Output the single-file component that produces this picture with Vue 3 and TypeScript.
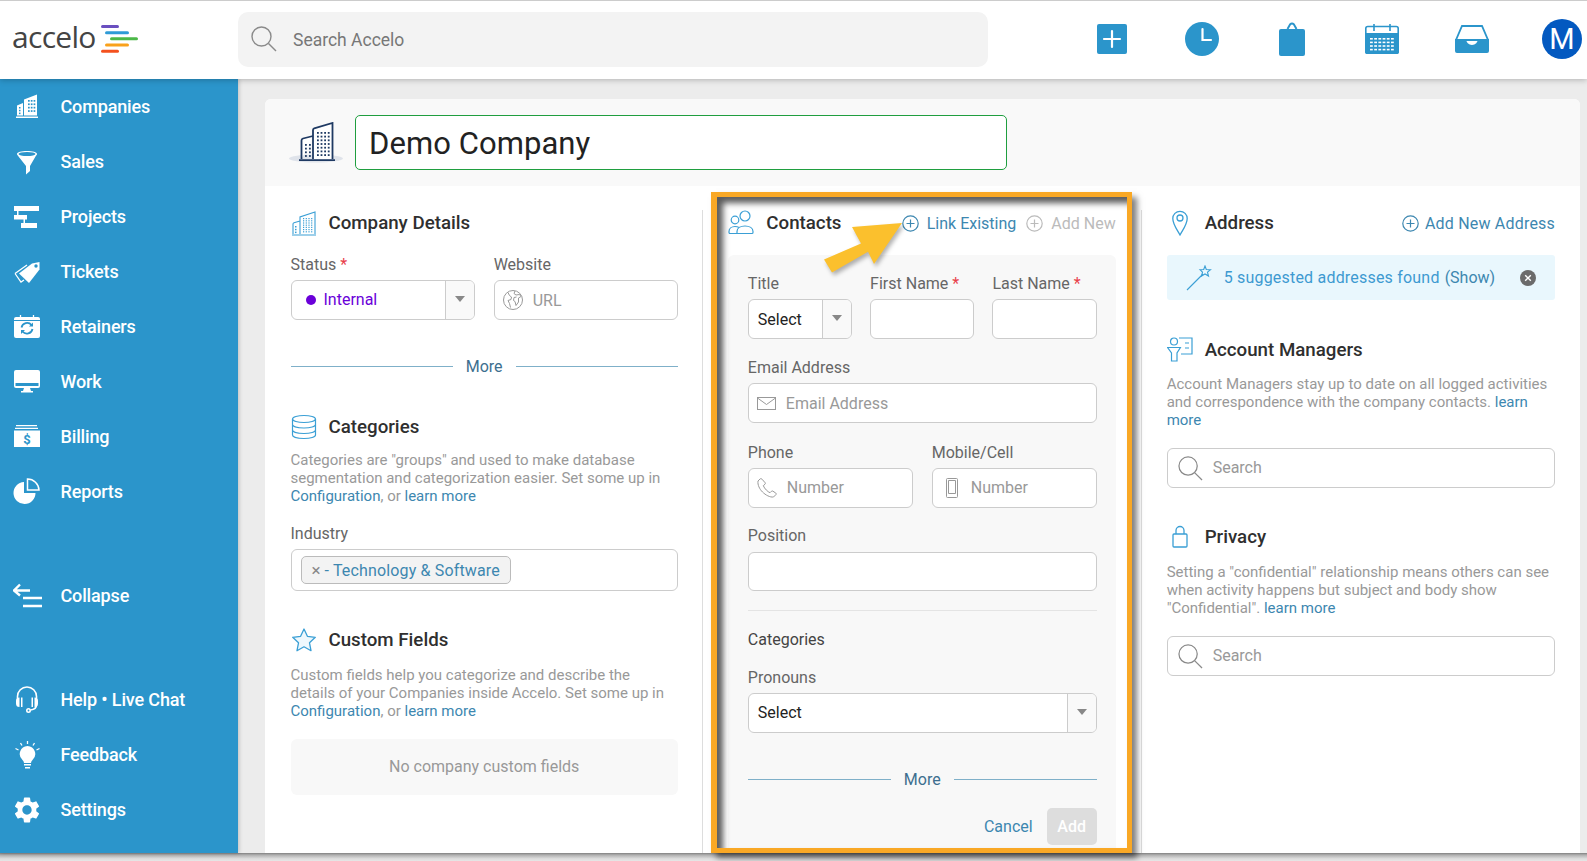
<template>
  <div class="page">
    <header class="topbar">
      <div class="logo">
        <span class="logo-word">accelo</span>
        <svg class="logo-bars" width="40" height="30" viewBox="0 0 40 30">
          <rect x="1" y="0" width="18" height="3" rx="1.5" fill="#6a4fc0" />
          <rect x="5" y="6.2" width="24" height="3" rx="1.5" fill="#2f9bd6" />
          <rect x="10" y="12.2" width="28" height="3" rx="1.5" fill="#4cb848" />
          <rect x="5" y="18.5" width="24" height="3" rx="1.5" fill="#f9a11b" />
          <rect x="1" y="24.7" width="18" height="3" rx="1.5" fill="#f4511e" />
        </svg>
      </div>
      <div class="global-search">
        <svg width="26" height="26" viewBox="0 0 26 26" fill="none" stroke="#8a8a8a" stroke-width="1.4">
          <circle cx="10.5" cy="10.5" r="9.5" />
          <path d="M17.5 17.5l7.5 7.5" />
        </svg>
        <span>Search Accelo</span>
      </div>
      <div class="quick">
        <svg class="q1" width="30" height="30" viewBox="0 0 30 30">
          <rect width="30" height="30" rx="2" fill="#2b95cb" />
          <path d="M15 7v16M7 15h16" stroke="#fff" stroke-width="2.2" stroke-linecap="round" />
        </svg>
        <svg class="q2" width="34" height="34" viewBox="0 0 34 34">
          <circle cx="17" cy="17" r="17" fill="#2b95cb" />
          <path d="M17.5 7v11h8.5" fill="none" stroke="#fff" stroke-width="2.2" stroke-linecap="round" />
        </svg>
        <svg class="q3" width="26" height="34" viewBox="0 0 26 34">
          <path d="M8.5 7l2.5-4.5q2-2 4 0L17.500 7" fill="none" stroke="#2b95cb" stroke-width="2" />
          <rect y="7" width="26" height="27" rx="2" fill="#2b95cb" />
        </svg>
        <svg class="q4" width="34" height="30" viewBox="0 0 34 30">
          <rect x=".8" y="2.500" width="32.400" height="26.700" rx="2" fill="#fff" stroke="#2b95cb" stroke-width="1.600" />
          <path d="M9 0v7M25 0v7" stroke="#2b95cb" stroke-width="1.600" />
          <path d="M0 9h34v19a2 2 0 0 1-2 2H2a2 2 0 0 1-2-2z" fill="#2b95cb" />
          <g fill="#fff" v-html="calDots"></g>
        </svg>
        <svg class="q5" width="34" height="28" viewBox="0 0 34 28">
          <path d="M7 1h20l6 14H1z" fill="none" stroke="#2b95cb" stroke-width="1.800" />
          <path d="M0 14h11a6 6 0 0 0 12 0h11v12a2 2 0 0 1-2 2H2a2 2 0 0 1-2-2z" fill="#2b95cb" />
        </svg>
        <div class="avatar">M</div>
      </div>
    </header>

    <div class="main">
      <nav class="sidebar">
        <a v-for="item in nav" :key="item.label" class="nav-item" :class="{ spaced: item.spaced }">
          <svg width="30" height="30" viewBox="0 0 30 30" v-html="item.icon"></svg>
          <span>{{ item.label }}</span>
        </a>
      </nav>

      <div class="content">
        <section class="card">
          <div class="card-head">
            <svg width="54" height="42" viewBox="0 0 54 42">
              <ellipse cx="27" cy="36.500" rx="27" ry="4" fill="#dfe3ea" />
              <path d="M12.500 37V18.500q0-1.500 1.500-2l10-2.500" fill="#fff" stroke="#1f3a63" stroke-width="1.800" />
              <path d="M24 37V8q0-1.200 1.200-1.600L43.500 1V37" fill="#fff" stroke="#1f3a63" stroke-width="1.800" />
              <path d="M10 38.200h36" stroke="#1f3a63" stroke-width="1.800" />
              <g fill="#1f3a63" v-html="bigWindows"></g>
            </svg>
            <div class="name-input">Demo Company</div>
          </div>

          <div class="columns">
            <div class="col first">
              <div class="sec-head">
                <svg width="26" height="26" viewBox="0 0 26 26" v-html="icons.building"></svg>
                <h3>Company Details</h3>
              </div>
              <div class="pair status-row">
                <div>
                  <label>Status <em>*</em></label>
                  <div class="field select">
                    <span class="dot"></span><span class="internal">Internal</span>
                    <span class="caret"></span>
                  </div>
                </div>
                <div>
                  <label>Website</label>
                  <div class="field url">
                    <svg width="20" height="20" viewBox="0 0 20 20" fill="none" stroke="#999" stroke-width="1">
                      <circle cx="10" cy="10" r="9.500" />
                      <path d="M5 2.500l1.500 3 2 1.500-.5 2.500-3 1 1.500 3 1 4M12 1l-1 2.500 2 1.500 3.500-.5 1.500 2-2.500 1.500v4l-2.500 3.500-1-4-1.500-1 .5-3 2.500-.5" />
                    </svg>
                    <span class="ph">URL</span>
                  </div>
                </div>
              </div>
              <div class="more m36"><i></i><span>More</span><i></i></div>

              <div class="sec-head m38">
                <svg width="26" height="26" viewBox="0 0 26 26" v-html="icons.stack"></svg>
                <h3>Categories</h3>
              </div>
              <p class="desc m13">
                Categories are "groups" and used to make database segmentation and categorization easier. Set some up in
                <a>Configuration</a>, or <a>learn more</a>
              </p>
              <label class="m18">Industry</label>
              <div class="field tags">
                <span class="tag"><b>×</b> - <a>Technology &amp; Software</a></span>
              </div>

              <div class="sec-head m36">
                <svg width="26" height="26" viewBox="0 0 26 26">
                  <path d="M13 2l3.400 7.300 7.900 1-5.800 5.500 1.500 7.900-7-3.900-7 3.900 1.500-7.900L1.700 10.300l7.900-1z" fill="#eef8fd" stroke="#3a9fd5" stroke-width="1.300" stroke-linejoin="round" />
                </svg>
                <h3>Custom Fields</h3>
              </div>
              <p class="desc m15">
                Custom fields help you categorize and describe the details of your Companies inside Accelo. Set some up in
                <a>Configuration</a>, or <a>learn more</a>
              </p>
              <div class="empty">No company custom fields</div>
            </div>

            <div class="col contacts">
              <div class="sec-head">
                <svg width="26" height="26" viewBox="0 0 26 26" v-html="icons.people"></svg>
                <h3>Contacts</h3>
                <div class="head-actions">
                  <a class="action">
                    <svg width="17" height="17" viewBox="0 0 17 17" v-html="plusCircle('#3d87b0')"></svg>Link Existing
                  </a>
                  <a class="action off">
                    <svg width="17" height="17" viewBox="0 0 17 17" v-html="plusCircle('#bbb')"></svg>Add New
                  </a>
                </div>
              </div>

              <div class="panel">
                <div class="triple">
                  <div>
                    <label>Title</label>
                    <div class="field select sel-text">Select<span class="caret"></span></div>
                  </div>
                  <div>
                    <label>First Name <em>*</em></label>
                    <div class="field"></div>
                  </div>
                  <div>
                    <label>Last Name <em>*</em></label>
                    <div class="field"></div>
                  </div>
                </div>

                <label class="m18">Email Address</label>
                <div class="field with-icon">
                  <svg width="19" height="13" viewBox="0 0 19 13" fill="none" stroke="#999">
                    <rect x=".5" y=".5" width="18" height="12" />
                    <path d="M.5 1l9 6.500 9-6.500" />
                  </svg>
                  <span class="ph">Email Address</span>
                </div>

                <div class="pair m19">
                  <div>
                    <label>Phone</label>
                    <div class="field with-icon">
                      <svg width="20" height="20" viewBox="0 0 20 20" fill="none" stroke="#999">
                        <path d="M3 1L1 3c-.5 4 1.500 8 4.500 11s7.500 5.500 11 5l2.500-2.500c.4-.5.300-1-.2-1.400l-3-2c-.5-.3-1-.2-1.400.2l-1.400 1.400c-2-.7-5.500-4-6.700-7l1.700-1.500c.4-.4.500-.9.200-1.400L5 1.200C4.500.6 3.500.5 3 1z" />
                      </svg>
                      <span class="ph">Number</span>
                    </div>
                  </div>
                  <div>
                    <label>Mobile/Cell</label>
                    <div class="field with-icon mobile">
                      <svg width="12" height="20" viewBox="0 0 12 20" fill="none" stroke="#999">
                        <rect x=".5" y=".5" width="11" height="19" rx="1" />
                        <path d="M2.500 2.500h7v13h-7z" />
                      </svg>
                      <span class="ph">Number</span>
                    </div>
                  </div>
                </div>

                <label class="m17">Position</label>
                <div class="field short"></div>
                <hr class="rule" />
                <label class="m18 dark">Categories</label>
                <label class="m18">Pronouns</label>
                <div class="field select sel-text raised">Select<span class="caret"></span></div>
                <div class="more m36"><i></i><span>More</span><i></i></div>
                <div class="form-actions">
                  <a>Cancel</a>
                  <button type="button">Add</button>
                </div>
              </div>
            </div>

            <div class="col last">
              <div class="sec-head">
                <svg width="26" height="26" viewBox="0 0 26 26" fill="none" stroke="#3a9fd5" stroke-width="1.300">
                  <path d="M13 25C9 18 5.800 14 5.800 8.500a7.200 7.200 0 0 1 14.400 0C20.200 14 17 18 13 25z" />
                  <circle cx="13" cy="8" r="3" />
                </svg>
                <h3>Address</h3>
                <div class="head-actions">
                  <a class="action wide">
                    <svg width="17" height="17" viewBox="0 0 17 17" v-html="plusCircle('#3d87b0')"></svg>Add New Address
                  </a>
                </div>
              </div>
              <div class="banner">
                <svg width="26" height="26" viewBox="0 0 26 26" fill="none" stroke="#3a9fd5" stroke-width="1.100">
                  <path d="M1 25L17 9" />
                  <path d="M19 1l1.300 3.500 4.200.2-3 2.500 1 3.800-3.500-2-3.500 2 1-3.800-2.500-2.500 3.700-.2z" />
                </svg>
                <span class="found">5 suggested addresses found</span>
                <span class="show">(Show)</span>
                <svg class="close" width="16" height="16" viewBox="0 0 16 16">
                  <circle cx="8" cy="8" r="8" fill="#6b6b6b" />
                  <path d="M5.200 5.200l5.600 5.600M10.800 5.200l-5.600 5.600" stroke="#fff" stroke-width="1.400" />
                </svg>
              </div>

              <div class="sec-head m37">
                <svg width="26" height="26" viewBox="0 0 26 26" fill="none" stroke="#3a9fd5" stroke-width="1.200">
                  <circle cx="7" cy="4.500" r="3.500" />
                  <path d="M.6 10.500h12.800l-3.400 5.500v8H4.500v-8z" />
                  <path d="M12 1h13v16H14M18 6h4M18 11h4" />
                </svg>
                <h3>Account Managers</h3>
              </div>
              <p class="desc m14">
                Account Managers stay up to date on all logged activities and correspondence with the company contacts.
                <a>learn more</a>
              </p>
              <div class="field search m19">
                <svg width="25" height="25" viewBox="0 0 26 26" fill="none" stroke="#8a8a8a" stroke-width="1.300">
                  <circle cx="10.500" cy="10.500" r="9.500" />
                  <path d="M17.500 17.500l7.500 7.500" />
                </svg>
                <span class="ph">Search</span>
              </div>

              <div class="sec-head m36">
                <svg width="26" height="26" viewBox="0 0 26 26" fill="none" stroke="#3a9fd5" stroke-width="1.300">
                  <rect x="6" y="10" width="14" height="13" rx="1" />
                  <path d="M9 10V6.500a4 4 0 0 1 8 0V10" />
                </svg>
                <h3>Privacy</h3>
              </div>
              <p class="desc m15">
                Setting a "confidential" relationship means others can see when activity happens but subject and body show
                "Confidential". <a>learn more</a>
              </p>
              <div class="field search m19">
                <svg width="25" height="25" viewBox="0 0 26 26" fill="none" stroke="#8a8a8a" stroke-width="1.300">
                  <circle cx="10.500" cy="10.500" r="9.500" />
                  <path d="M17.500 17.500l7.500 7.500" />
                </svg>
                <span class="ph">Search</span>
              </div>
            </div>
          </div>
        </section>
      </div>
    </div>

    <div class="edge"></div>

    <!-- annotation drawn over the screenshot -->
    <div class="highlight"></div>
    <svg class="arrow" width="90" height="62" viewBox="0 0 90 62">
      <path d="M82 3L32 7l9 16.600L4 39.500l8 13 36-20.700L54 44z" fill="#fbc02d" />
    </svg>
  </div>
</template>

<script setup lang="ts">
const BLUE = '#2b95cb'

// small grid of squares, used for building windows and the calendar
const dots = (x: number, y: number, cols: number, rows: number, dx: number, dy: number, w: number, h = w, fill = '') => {
  let out = ''
  for (let r = 0; r < rows; r++) {
    for (let c = 0; c < cols; c++) {
      out += `<rect x="${x + c * dx}" y="${y + r * dy}" width="${w}" height="${h}"${fill ? ` fill="${fill}"` : ''}/>`
    }
  }
  return out
}

const calDots = dots(5, 14, 6, 4, 4.2, 3.6, 2.8, 1.6)
const bigWindows = dots(28, 10, 4, 7, 3.6, 3.7, 1.800) + dots(16, 22, 2, 4, 4, 3.700, 1.800)

const plusCircle = (c: string) =>
  `<circle cx="8.500" cy="8.500" r="7.700" fill="none" stroke="${c}" stroke-width="1.200"/><path d="M8.500 4.500v8M4.500 8.500h8" stroke="${c}" stroke-width="1.200"/>`

const icons = {
  building:
    '<g fill="none" stroke="#3a9fd5" stroke-width="1.100"><path d="M1 25h24M2 24V14q0-1 1-1.300L9 11M9 24V7l15-5v22"/></g>' +
    dots(12, 8, 4, 7, 2.700, 2.200, 1.200, 1.200, '#3a9fd5') +
    dots(4, 16, 1, 3, 2, 2.800, 1.500, 1.500, '#3a9fd5'),
  stack:
    '<g fill="none" stroke="#3a9fd5" stroke-width="1.200"><ellipse cx="13" cy="5" rx="11.500" ry="3.500"/><path d="M1.500 5v16c0 2 5 3.500 11.500 3.500S24.500 23 24.500 21V5M1.500 10.500c0 2 5 3.500 11.500 3.500s11.500-1.500 11.500-3.500M1.500 16c0 2 5 3.500 11.500 3.500S24.500 18 24.500 16"/></g>',
  people:
    '<g fill="none" stroke="#3a9fd5" stroke-width="1.200"><circle cx="17" cy="6" r="5"/><circle cx="7" cy="10" r="3.800"/><path d="M9 23.500v-2c0-3.500 3.500-5.500 8-5.500s8 2 8 5.500v1a1 1 0 0 1-1 1zM9 23.500H2a1 1 0 0 1-1-1v-1c0-3 2.500-5 6-5 1.500 0 3 .4 4 1"/></g>',
}

const seal = (d: string) => `<path d="${d}" fill="#fff"/>`

const nav = [
  {
    label: 'Companies',
    icon:
      seal('M3 24.500h22V26H3zM4 23.500V13.500l6-2.500v12.500zM11 23.500V7.500L24 2.500v21z') +
      dots(15, 8, 3, 4, 2.800, 3.400, 1.700, 1.700, BLUE) + dots(6, 15, 1, 3, 2, 2.800, 1.500, 1.500, BLUE),
  },
  {
    label: 'Sales',
    icon:
      seal('M4 7c0-2 4.500-3 10-3s10 1 10 3c0 1-1 1.500-1.500 2.500L17 19v5l-4 3.500V19L5.500 9.500C5 8.500 4 8 4 7z') +
      `<ellipse cx="14" cy="7" rx="8.500" ry="2" fill="${BLUE}"/>`,
  },
  {
    label: 'Projects',
    icon: seal('M1 4h25v5H1zM4 9h1.500v4H4zM1 13h13v4.500H1zM10.500 17.500H12V21h-1.500zM8 21h16v5H8z'),
  },
  {
    label: 'Tickets',
    icon:
      `<path d="M2 16.500L14 8M2 16.500l6 8.500 3-2" fill="none" stroke="#fff" stroke-width="1.300"/>` +
      seal('M6 16.500L19 6.500l7.500-1.500V12.500L16 26z') +
      `<circle cx="23" cy="9" r="1.700" fill="${BLUE}"/>`,
  },
  {
    label: 'Retainers',
    icon:
      seal('M3 5h22a2 2 0 0 1 2 2v17a2 2 0 0 1-2 2H3a2 2 0 0 1-2-2V7a2 2 0 0 1 2-2z') +
      `<path d="M1 8.500h26" stroke="${BLUE}"/><path d="M7.500 3v4.500M20.500 3v4.500" stroke="#fff" stroke-width="1.300"/>` +
      `<g fill="none" stroke="${BLUE}" stroke-width="1.800"><path d="M8.500 15.500a5.700 5.700 0 0 1 10-2.500M19.500 17a5.700 5.700 0 0 1-10 2.500"/></g>` +
      `<path d="M20 10.500v4h-4zM8 22v-4h4z" fill="${BLUE}"/>`,
  },
  {
    label: 'Work',
    icon:
      seal('M3 3h22a2 2 0 0 1 2 2v14a2 2 0 0 1-2 2H3a2 2 0 0 1-2-2V5a2 2 0 0 1 2-2z') +
      `<rect x="2.500" y="16" width="23" height="3" fill="${BLUE}"/>` +
      seal('M11 21h6l1 3h2v1.500H8V24h2z'),
  },
  {
    label: 'Billing',
    icon:
      seal('M3 3h21v1.200H3zM2 5.800h23V7H2zM1 8.500h26V25H1z') +
      `<text x="14" y="22" text-anchor="middle" font-family="Roboto, sans-serif" font-size="13" font-weight="700" fill="${BLUE}">$</text>`,
  },
  {
    label: 'Reports',
    icon:
      seal('M11 5v11h11.500A11 11 0 1 1 11 5z') +
      `<path d="M14.500 2A11.500 11.500 0 0 1 26 13H14.500z" fill="none" stroke="#fff" stroke-width="1.500"/>`,
  },
  {
    label: 'Collapse',
    spaced: true,
    icon: `<g fill="none" stroke="#fff" stroke-width="2.400"><path d="M1 9.500h16M7 3.500L1 9.500l6 5M10 17h19M10 25h19"/></g>`,
  },
  {
    label: 'Help • Live Chat',
    spaced: true,
    icon:
      `<g fill="none" stroke="#fff" stroke-width="1.600"><path d="M4.500 16v-4.500a9.500 9.500 0 0 1 19 0V16M23.500 20c0 3-2 4.500-6 5"/><circle cx="15.500" cy="25.500" r="1.700"/></g>` +
      seal('M6.500 12.500a3.500 3.500 0 0 0-3.500 3.500v2.500a3.500 3.500 0 0 0 3.500 3.500zM21.500 12.500a3.500 3.500 0 0 1 3.500 3.500v2.500a3.500 3.500 0 0 1-3.500 3.500zM8 12.500h1.500V22H8zM18.500 12.500H20V22h-1.500z'),
  },
  {
    label: 'Feedback',
    spaced: false,
    icon:
      seal('M14.500 6a8 8 0 0 1 5 14c-1 1-1.500 2-1.500 3h-7c0-1-.5-2-1.500-3a8 8 0 0 1 5-14zM11 24h7v1.500h-7zM12 27h5v1.500h-5z') +
      `<path d="M14.500 1v3M7.500 3l1.500 2.500M21.500 3L20 5.500M2.500 8.500l3 1.500M26.500 8.500l-3 1.500" stroke="#fff" stroke-width="1.300"/>`,
  },
  {
    label: 'Settings',
    icon:
      `<svg x="-1.500" y="-.5" width="31" height="31" viewBox="0 0 24 24"><path fill="#fff" d="M19.140 12.940c.04-.3.06-.61.06-.94 0-.32-.02-.64-.07-.94l2.030-1.580c.18-.14.230-.41.120-.61l-1.920-3.320c-.12-.22-.37-.29-.59-.22l-2.390.96c-.5-.38-1.030-.7-1.620-.94l-.36-2.540c-.04-.24-.24-.41-.48-.41h-3.840c-.24 0-.43.170-.47.410l-.36 2.540c-.59.24-1.130.57-1.620.94l-2.390-.96c-.22-.08-.47 0-.59.220L2.740 8.870c-.12.210-.08.470.120.610l2.030 1.580c-.05.3-.09.63-.09.94s.02.64.07.94l-2.030 1.580c-.18.14-.23.41-.12.61l1.920 3.320c.12.22.37.29.59.22l2.390-.96c.5.38 1.030.7 1.620.94l.36 2.540c.05.24.24.41.48.41h3.840c.24 0 .44-.17.47-.41l.36-2.540c.59-.24 1.130-.56 1.620-.94l2.390.96c.22.08.47 0 .59-.22l1.920-3.320c.12-.22.07-.47-.12-.61l-2.010-1.580zM12 15.600c-1.980 0-3.600-1.620-3.600-3.600s1.620-3.600 3.600-3.600 3.600 1.620 3.600 3.600-1.620 3.600-3.600 3.600z"/></svg>`,
  },
]
</script>

<style>
html, body { margin: 0; background: #e2e2e2; }
body { overflow: hidden; }
</style>

<style scoped>
.page {
  position: relative;
  width: 1587px;
  height: 861px;
  display: flex;
  flex-direction: column;
  background: #ececec;
  font-family: Roboto, sans-serif;
  font-size: 16px;
  color: #333;
}
.edge {
  height: 8px;
  flex-shrink: 0;
  background: linear-gradient(#808080, #b0b0b0 25%, #dcdcdc 70%, #e6e6e6);
}
.topbar {
  height: 76px;
  padding-bottom: 2px;
  flex-shrink: 0;
  display: flex;
  align-items: center;
  background: #fff;
  border-top: 1px solid #ccc;
  box-shadow: 0 1px 6px rgba(0, 0, 0, 0.25);
  position: relative;
  z-index: 2;
}
.logo {
  width: 238px;
  flex-shrink: 0;
  display: flex;
  align-items: center;
  padding-left: 12px;
  box-sizing: border-box;
}
.logo-word {
  font-family: "Open Sans", sans-serif;
  font-size: 30px;
  letter-spacing: -0.7px;
  color: #444;
  line-height: 1;
  margin-top: -4px;
}
.logo-bars { margin-left: 4px; margin-top: 1px; }
.global-search {
  width: 750px;
  height: 55px;
  display: flex;
  align-items: center;
  gap: 16px;
  padding-left: 13px;
  box-sizing: border-box;
  background: #f3f3f3;
  border-radius: 10px;
  font-size: 17.5px;
  color: #777;
}
.global-search span { padding-top: 2px; }
.quick {
  flex: 1;
  display: flex;
  align-items: center;
  padding-left: 109px;
}
.q2 { margin-left: 58px; }
.q3 { margin-left: 60px; }
.q4 { margin-left: 60px; }
.q5 { margin-left: 56px; }
.avatar {
  width: 40px;
  height: 40px;
  margin-left: 53px;
  border-radius: 50%;
  background: #0359c0;
  color: #fff;
  font-size: 29px;
  line-height: 40px;
  text-align: center;
}
.main { flex: 1; display: flex; min-height: 0; }
.sidebar {
  width: 238px;
  flex-shrink: 0;
  background: #2b95cb;
  box-shadow: 1px 0 4px rgba(0, 0, 0, 0.2);
  position: relative;
  z-index: 1;
}
.nav-item {
  height: 55px;
  display: flex;
  align-items: center;
  gap: 17.500px;
  padding-left: 13px;
  color: #fff;
  font-size: 18px;
  font-weight: 500;
  letter-spacing: -0.15px;
}
.nav-item.spaced { margin-top: 49px; }
.content { flex: 1; padding: 20px 7px 0 27px; min-width: 0; display: flex; }
.card {
  flex: 1;
  background: #fff;
  border-radius: 6px 6px 0 0;
  display: flex;
  flex-direction: column;
  min-width: 0;
}
.card-head {
  height: 87px;
  flex-shrink: 0;
  display: flex;
  align-items: center;
  gap: 12px;
  padding-left: 24px;
  background: #f9f9f9;
  border-radius: 6px 6px 0 0;
}
.name-input {
  width: 652px;
  height: 55px;
  margin-bottom: 1px;
  box-sizing: border-box;
  border: 1px solid #1f9e3f;
  border-radius: 5px;
  background: #fff;
  padding-left: 13px;
  font-size: 31px;
  line-height: 55px;
  color: #222;
  letter-spacing: 0.07px;
}
.columns {
  flex: 1;
  display: grid;
  grid-template-columns: repeat(3, 1fr);
  min-height: 0;
}
.col {
  margin-top: 24px;
  padding: 0 25px;
  border-right: 1px solid #ddd;
  min-width: 0;
}
.col.first { padding: 0 24.5px 0 25.5px; }
.col.last { border-right: 0; }
.contacts { display: flex; flex-direction: column; }
.sec-head {
  height: 24px;
  padding-top: 2px;
  box-sizing: border-box;
  display: flex;
  align-items: center;
  gap: 12px;
}
.sec-head svg { flex-shrink: 0; }
.sec-head h3 { margin: 0; font-size: 18.72px; font-weight: 500; color: #2f2f2f; }
.head-actions { margin-left: auto; display: flex; gap: 10px; }
.action { display: flex; align-items: center; gap: 8px; color: #3d87b0; }
.action.off { color: #bbb; }
.action.wide { gap: 6px; letter-spacing: 0.2px; }
label { display: block; height: 20px; line-height: 22px; margin-bottom: 6px; color: #666; }
label em { font-style: normal; color: #e8404a; }
label.dark { color: #444; margin-bottom: 0; }
.status-row { margin-top: 20px; }
.pair { display: grid; grid-template-columns: 1fr 1fr; gap: 19px; }
.triple { display: grid; grid-template-columns: repeat(3, 1fr); gap: 18px; }
.field {
  height: 40px;
  box-sizing: border-box;
  display: flex;
  align-items: center;
  border: 1px solid #ccc;
  border-radius: 6px;
  background: #fff;
  overflow: hidden;
}
.field.short { height: 39px; margin-top: 7px; }
.ph { color: #999; }
.search .ph, .pair .with-icon .ph { padding-bottom: 2px; }
.select { position: relative; }
.sel-text { padding-left: 9px; color: #222; }
.raised { padding-bottom: 0; line-height: 36px; }
.caret {
  margin-left: auto;
  align-self: stretch;
  width: 28px;
  flex-shrink: 0;
  border-left: 1px solid #ccc;
  background: #f9f9f9;
  position: relative;
}
.caret::after {
  content: "";
  position: absolute;
  left: 9px;
  top: 15px;
  border: 5px solid transparent;
  border-top: 6px solid #888;
  border-bottom: 0;
}
.dot {
  width: 10px;
  height: 10px;
  margin-left: 14px;
  border-radius: 50%;
  background: #6a00d9;
}
.internal { margin-left: 8px; padding-bottom: 2px; color: #6a00d9; }
.url { padding-left: 8px; gap: 10px; }
.with-icon { padding-left: 8px; gap: 10px; }
.mobile { padding-left: 13px; gap: 13px; }
.search { padding-left: 10px; gap: 10px; }
.more { display: flex; align-items: center; gap: 13px; height: 20px; color: #3d6f8f; }
.more i { flex: 1; height: 1px; background: #7fb0c9; }
.desc { margin: 0; font-size: 15px; line-height: 18px; color: #999; }
.desc a { color: #3d87b0; }
.tags { height: 42px; padding-left: 9px; }
.tag {
  height: 28px;
  box-sizing: border-box;
  display: flex;
  align-items: center;
  padding: 0 10px;
  border: 1px solid #bbb;
  border-radius: 5px;
  background: #f3f3f3;
  color: #3d87b0;
  white-space: pre;
}
.tag b { font-weight: 400; color: #888; font-size: 17px; }
.tag a { color: #3d87b0; letter-spacing: 0.15px; }
.empty {
  height: 56px;
  margin-top: 19px;
  display: flex;
  align-items: center;
  justify-content: center;
  padding-bottom: 2px;
  box-sizing: border-box;
  background: #f8f8f8;
  border-radius: 6px;
  color: #999;
}
.panel {
  flex: 1;
  margin-top: 21px;
  padding: 18px 19px 0 19.500px;
  background: #f8f8f8;
  border-radius: 6px 6px 0 0;
}
.rule { margin: 19px 0 0; border: 0; border-top: 1px solid #e4e4e4; }
.form-actions { margin-top: 19px; display: flex; justify-content: flex-end; align-items: center; gap: 14px; }
.form-actions a { color: #3d87b0; }
.form-actions button {
  width: 50px;
  height: 37px;
  border: 0;
  border-radius: 5px;
  background: #ddd;
  color: #fff;
  font: 500 16px Roboto, sans-serif;
}
.banner {
  height: 45px;
  margin-top: 21px;
  display: flex;
  align-items: center;
  padding-left: 19px;
  background: #e9f7fd;
  border-radius: 3px;
}
.found { margin-left: 12px; color: #3d9ad1; letter-spacing: 0.2px; }
.show { margin-left: 5px; color: #3d87b0; }
.close { margin-left: auto; margin-right: 19px; }
.m13 { margin-top: 13px; }
.m14 { margin-top: 14px; }
.m15 { margin-top: 15px; }
.m17 { margin-top: 17px; }
.m18 { margin-top: 18px; }
.m19 { margin-top: 19px; }
.m36 { margin-top: 36px; }
.m37 { margin-top: 37px; }
.m38 { margin-top: 38px; }
.highlight {
  position: absolute;
  left: 711px;
  top: 192px;
  width: 421px;
  height: 661px;
  box-sizing: border-box;
  border: 5px solid #f9a825;
  border-left-width: 6px;
  box-shadow: 5px 5px 6px rgba(0, 0, 0, 0.5), inset 6px 6px 6px rgba(0, 0, 0, 0.65);
  z-index: 3;
  pointer-events: none;
}
.arrow {
  position: absolute;
  left: 820px;
  top: 220px;
  filter: drop-shadow(2px 3px 2px rgba(0, 0, 0, 0.3));
  z-index: 4;
}
</style>
